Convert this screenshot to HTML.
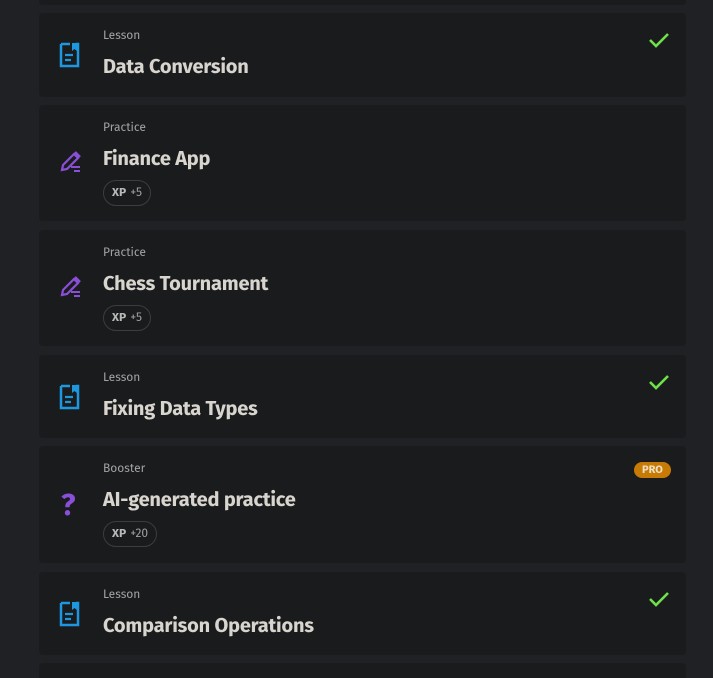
<!DOCTYPE html><html><head><style>
html,body{margin:0;width:713px;height:678px;overflow:hidden}
body{background:#202124;position:relative;font-family:"Fira Sans","Liberation Sans",sans-serif}
.c{position:absolute;left:39px;width:647px;background:#1a1b1d;border-radius:4px}
.l{position:absolute;left:64px;font-size:12px;color:#a3a3a3}
.t{position:absolute;left:64px;font-size:20px;font-weight:bold;color:#d8d4ce;letter-spacing:-0.2px}
.x{position:absolute;left:64px;height:24px;border:1px solid #3c3d40;border-radius:13px;font-size:12px;color:#a0a0a0;line-height:24px;padding:0 8px}
.x b{color:#b8b8b8;margin-right:4px}
.i{position:absolute;left:20px}
.k{position:absolute;left:609px}
.p{position:absolute;left:595px;background:#c77a06;color:#f0e0c0;font-size:11px;font-weight:bold;border-radius:8px;padding:1px 8px;line-height:14px}
</style></head><body>
<div class="c" style="top:-10px;height:15px"></div>

<div class="c" style="top:13px;height:84px">
<svg class="i" style="top:29px" width="22" height="26" viewBox="0 0 22 26"><path d="M2 2h9M17 2h2v22H2V2" fill="none" stroke="#1d97e0" stroke-width="2.5"/><path d="M13 1h5v8l-2.5-2-2.5 2z" fill="#1d97e0"/><path d="M6 13h8M6 18h6" stroke="#1d97e0" stroke-width="2.2"/></svg>
<div class="l" style="top:16px">Lesson</div><div class="t" style="top:42px">Data Conversion</div>
<svg class="k" style="top:19px" width="22" height="16"><path d="M2 8l6 6 12-12" fill="none" stroke="#6ee04a" stroke-width="2.6"/></svg></div>

<div class="c" style="top:105px;height:116px">
<svg class="i" style="top:45px" width="24" height="24" viewBox="0 0 24 24"><path d="M3 20l1-5L15 4l4 4L8 19z" fill="none" stroke="#8a4fd8" stroke-width="2.2"/><path d="M16 2l5 5" stroke="#8a4fd8" stroke-width="2.5"/><path d="M12 17h9M15 21h6" stroke="#8a4fd8" stroke-width="2"/></svg>
<div class="l" style="top:16px">Practice</div><div class="t" style="top:42px">Finance App</div><div class="x" style="top:75px"><b>XP</b>+5</div></div>

<div class="c" style="top:230px;height:116px">
<svg class="i" style="top:45px" width="24" height="24" viewBox="0 0 24 24"><path d="M3 20l1-5L15 4l4 4L8 19z" fill="none" stroke="#8a4fd8" stroke-width="2.2"/><path d="M16 2l5 5" stroke="#8a4fd8" stroke-width="2.5"/><path d="M12 17h9M15 21h6" stroke="#8a4fd8" stroke-width="2"/></svg>
<div class="l" style="top:16px">Practice</div><div class="t" style="top:42px">Chess Tournament</div><div class="x" style="top:75px"><b>XP</b>+5</div></div>

<div class="c" style="top:355px;height:83px">
<svg class="i" style="top:29px" width="22" height="26" viewBox="0 0 22 26"><path d="M2 2h9M17 2h2v22H2V2" fill="none" stroke="#1d97e0" stroke-width="2.5"/><path d="M13 1h5v8l-2.5-2-2.5 2z" fill="#1d97e0"/><path d="M6 13h8M6 18h6" stroke="#1d97e0" stroke-width="2.2"/></svg>
<div class="l" style="top:16px">Lesson</div><div class="t" style="top:42px">Fixing Data Types</div>
<svg class="k" style="top:19px" width="22" height="16"><path d="M2 8l6 6 12-12" fill="none" stroke="#6ee04a" stroke-width="2.6"/></svg></div>

<div class="c" style="top:446px;height:117px">
<div class="i" style="top:42px;left:22px;font-size:30px;font-weight:bold;color:#8a4fd8;line-height:34px">?</div>
<div class="l" style="top:16px">Booster</div><div class="t" style="top:42px">AI-generated practice</div><div class="x" style="top:75px"><b>XP</b>+20</div><div class="p" style="top:16px">PRO</div></div>

<div class="c" style="top:572px;height:83px">
<svg class="i" style="top:29px" width="22" height="26" viewBox="0 0 22 26"><path d="M2 2h9M17 2h2v22H2V2" fill="none" stroke="#1d97e0" stroke-width="2.5"/><path d="M13 1h5v8l-2.5-2-2.5 2z" fill="#1d97e0"/><path d="M6 13h8M6 18h6" stroke="#1d97e0" stroke-width="2.2"/></svg>
<div class="l" style="top:16px">Lesson</div><div class="t" style="top:42px">Comparison Operations</div>
<svg class="k" style="top:19px" width="22" height="16"><path d="M2 8l6 6 12-12" fill="none" stroke="#6ee04a" stroke-width="2.6"/></svg></div>

<div class="c" style="top:663px;height:30px"></div>
</body></html>
